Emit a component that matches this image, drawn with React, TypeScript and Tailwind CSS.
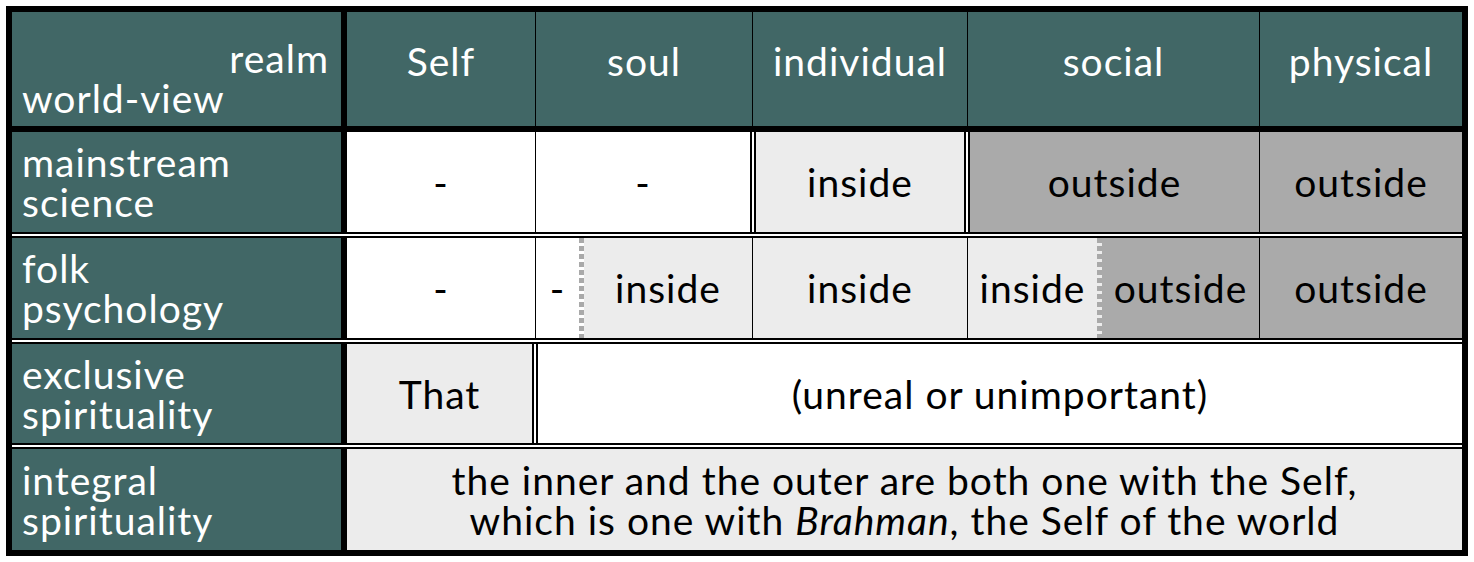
import React from "react";

const dots =
  "bg-[repeating-linear-gradient(to_bottom,#a9a9a9_0px,#a9a9a9_5px,transparent_5px,transparent_8px)]";

function Label({ lines }: { lines: string[] }) {
  return (
    <div className="w-[329px] shrink-0 bg-[#416766] text-white px-[10px] flex flex-col justify-center">
      {lines.map((l) => (
        <span key={l} className="block">
          {l}
        </span>
      ))}
    </div>
  );
}

export default function App() {
  return (
    <div className="bg-white w-[1474px] h-[562px] p-[6px] font-['Lato','Open_Sans',sans-serif] text-[39px] leading-[40px] tracking-[1px] text-black">
      <div className="w-[1462px] h-[550px] border-[6px] border-black flex flex-col bg-black">
        {/* header */}
        <div className="flex h-[114px] shrink-0 bg-[#416766] text-white">
          <div className="w-[329px] shrink-0 flex flex-col justify-center pt-[18px] px-[10px]">
            <span className="block text-right pr-[2px]">realm</span>
            <span className="block">world-view</span>
          </div>
          <div className="w-[6px] shrink-0 bg-black" />
          <div className="w-[188px] shrink-0 flex items-center justify-center pb-[16px]">Self</div>
          <div className="w-px shrink-0 bg-black" />
          <div className="w-[216px] shrink-0 flex items-center justify-center pb-[16px]">soul</div>
          <div className="w-px shrink-0 bg-black" />
          <div className="w-[214px] shrink-0 flex items-center justify-center pb-[16px]">individual</div>
          <div className="w-px shrink-0 bg-black" />
          <div className="w-[291px] shrink-0 flex items-center justify-center pb-[16px]">social</div>
          <div className="w-px shrink-0 bg-black" />
          <div className="flex-1 flex items-center justify-center pb-[16px]">physical</div>
        </div>
        <div className="h-[6px] shrink-0 bg-black" />

        {/* mainstream science */}
        <div className="flex h-[100px] shrink-0">
          <Label lines={["mainstream", "science"]} />
          <div className="w-[6px] shrink-0 bg-black" />
          <div className="w-[188px] shrink-0 bg-white flex items-center justify-center">-</div>
          <div className="w-px shrink-0 bg-black" />
          <div className="w-[214px] shrink-0 bg-white flex items-center justify-center">-</div>
          <div className="w-[6px] shrink-0 border-x-2 border-black bg-white" />
          <div className="w-[208px] shrink-0 bg-[#ececec] flex items-center justify-center">inside</div>
          <div className="w-[6px] shrink-0 border-x-2 border-black bg-white" />
          <div className="w-[289px] shrink-0 bg-[#aaaaaa] flex items-center justify-center">outside</div>
          <div className="w-px shrink-0 bg-black" />
          <div className="flex-1 bg-[#aaaaaa] flex items-center justify-center">outside</div>
        </div>
        <div className="h-[6px] shrink-0 border-y-2 border-black bg-white" />

        {/* folk psychology */}
        <div className="flex h-[100px] shrink-0">
          <Label lines={["folk", "psychology"]} />
          <div className="w-[6px] shrink-0 bg-black" />
          <div className="w-[188px] shrink-0 bg-white flex items-center justify-center">-</div>
          <div className="w-px shrink-0 bg-black" />
          <div className="w-[43px] shrink-0 bg-white flex items-center justify-center">-</div>
          <div className={`w-[5px] shrink-0 bg-white ${dots}`} />
          <div className="w-[168px] shrink-0 bg-[#ececec] flex items-center justify-center">inside</div>
          <div className="w-px shrink-0 bg-black" />
          <div className="w-[214px] shrink-0 bg-[#ececec] flex items-center justify-center">inside</div>
          <div className="w-px shrink-0 bg-black" />
          <div className="w-[129px] shrink-0 bg-[#ececec] flex items-center justify-center">inside</div>
          <div className={`w-[5px] shrink-0 bg-[#ececec] ${dots}`} />
          <div className="w-[157px] shrink-0 bg-[#aaaaaa] flex items-center justify-center">outside</div>
          <div className="w-px shrink-0 bg-black" />
          <div className="flex-1 bg-[#aaaaaa] flex items-center justify-center">outside</div>
        </div>
        <div className="h-[6px] shrink-0 border-y-2 border-black bg-white" />

        {/* exclusive spirituality */}
        <div className="flex h-[99px] shrink-0">
          <Label lines={["exclusive", "spirituality"]} />
          <div className="w-[6px] shrink-0 bg-black" />
          <div className="w-[185px] shrink-0 bg-[#ececec] flex items-center justify-center">That</div>
          <div className="w-[6px] shrink-0 border-x-2 border-black bg-white" />
          <div className="flex-1 bg-white flex items-center justify-center">(unreal or unimportant)</div>
        </div>
        <div className="h-[6px] shrink-0 border-y-2 border-black bg-white" />

        {/* integral spirituality */}
        <div className="flex h-[101px] shrink-0">
          <Label lines={["integral", "spirituality"]} />
          <div className="w-[6px] shrink-0 bg-black" />
          <div className="flex-1 bg-[#ececec] flex flex-col items-center justify-center text-center">
            <span>the inner and the outer are both one with the Self,</span>
            <span>
              which is one with <i>Brahman</i>, the Self of the world
            </span>
          </div>
        </div>
      </div>
    </div>
  );
}
